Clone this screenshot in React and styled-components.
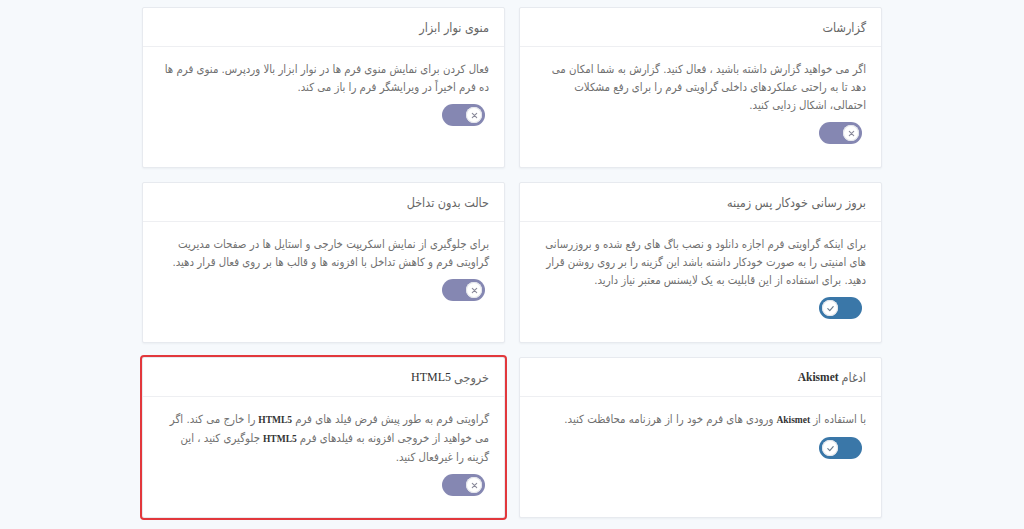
import React, { useState } from 'react';
import styled, { createGlobalStyle } from 'styled-components';

const GlobalStyle = createGlobalStyle`
  body {
    margin: 0;
    background: #f6f9fc;
    font-family: "DejaVu Sans Condensed", "DejaVu Sans", sans-serif;
  }
`;

// latin words (HTML5, Akismet) fall back to a serif in the original
const Latin = styled.span`
  font-family: "Liberation Serif", serif;
  font-weight: ${(p) => (p.$bold ? 700 : 400)};
  color: #333;
  font-size: ${(p) => p.$size || '9.5px'};
  margin: 0 3px;
`;

const getSettings = () => [
  {
    id: 'logging',
    title: 'گزارشات',
    text: 'اگر می خواهید گزارش داشته باشید ، فعال کنید. گزارش به شما امکان می دهد تا به راحتی عملکردهای داخلی گراویتی فرم را برای رفع مشکلات احتمالی، اشکال زدایی کنید.',
    on: false,
  },
  {
    id: 'toolbar',
    title: 'منوی نوار ابزار',
    text: 'فعال کردن برای نمایش منوی فرم ها در نوار ابزار بالا وردپرس. منوی فرم ها ده فرم اخیراً در ویرایشگر فرم را باز می کند.',
    on: false,
  },
  {
    id: 'autoupdate',
    title: 'بروز رسانی خودکار پس زمینه',
    text: 'برای اینکه گراویتی فرم اجازه دانلود و نصب باگ های رفع شده و بروزرسانی های امنیتی را به صورت خودکار داشته باشد این گزینه را بر روی روشن قرار دهید. برای استفاده از این قابلیت به یک لایسنس معتبر نیاز دارید.',
    on: true,
  },
  {
    id: 'noconflict',
    title: 'حالت بدون تداخل',
    text: 'برای جلوگیری از نمایش اسکریپت خارجی و استایل ها در صفحات مدیریت گراویتی فرم و کاهش تداخل با افزونه ها و قالب ها بر روی فعال قرار دهید.',
    on: false,
  },
  {
    id: 'akismet',
    title: <>ادغام<Latin $bold $size="11.5px">Akismet</Latin></>,
    text: <>با استفاده از<Latin $bold>Akismet</Latin>ورودی های فرم خود را از هرزنامه محافظت کنید.</>,
    on: true,
  },
  {
    id: 'html5',
    title: <>خروجی<Latin $size="12px">HTML5</Latin></>,
    text: <>گراویتی فرم به طور پیش فرض فیلد های فرم<Latin $bold>HTML5</Latin>را خارج می کند. اگر می خواهید از خروجی افزونه به فیلدهای فرم<Latin $bold>HTML5</Latin>جلوگیری کنید ، این گزینه را غیرفعال کنید.</>,
    on: false,
    highlighted: true,
  },
];

function Toggle({ on, onClick }) {
  return (
    <Track $on={on} onClick={onClick}>
      <Thumb>
        {on ? (
          <svg width="9" height="9" viewBox="0 0 10 10">
            <path d="M2 5.2 L4.2 7.3 L8 3" fill="none" stroke="#6b7a8a" strokeWidth="1.3" strokeLinecap="round" strokeLinejoin="round" />
          </svg>
        ) : (
          <svg width="7" height="7" viewBox="0 0 8 8">
            <path d="M1.5 1.5 L6.5 6.5 M6.5 1.5 L1.5 6.5" stroke="#8a8a9a" strokeWidth="1.3" strokeLinecap="round" />
          </svg>
        )}
      </Thumb>
    </Track>
  );
}

export default function App() {
  const settings = getSettings();
  const [values, setValues] = useState(
    Object.fromEntries(settings.map((s) => [s.id, s.on]))
  );

  return (
    <StPage>
      <GlobalStyle />
      <StGrid>
        {settings.map((s) => (
          <StCard key={s.id} $highlighted={s.highlighted}>
            <StCardHeader>{s.title}</StCardHeader>
            <StCardBody>
              <StText>{s.text}</StText>
              <Toggle
                on={values[s.id]}
                onClick={() => setValues({ ...values, [s.id]: !values[s.id] })}
              />
            </StCardBody>
          </StCard>
        ))}
      </StGrid>
    </StPage>
  );
}

const StPage = styled.div`
  min-height: 100vh;
  padding-top: 7px;
  direction: rtl;
`;

const StGrid = styled.div`
  display: grid;
  grid-template-columns: 363px 363px;
  grid-auto-rows: 161px;
  column-gap: 14px;
  row-gap: 14px;
  justify-content: center;
`;

const StCard = styled.div`
  background: #fff;
  border: 1px solid #e7eaef;
  border-radius: 2px;
  box-shadow: 0 1px 2px rgba(30, 50, 80, 0.05);
  display: flex;
  flex-direction: column;
  outline: ${(p) => (p.$highlighted ? '2px solid #e2383c' : 'none')};
`;

const StCardHeader = styled.div`
  height: 38px;
  display: flex;
  align-items: center;
  padding: 0 15px;
  border-bottom: 1px solid #eeeff2;
  color: #666;
  font-size: 12.5px;
`;

const StCardBody = styled.div`
  padding: 13px 15px 0 15px;
`;

const StText = styled.p`
  margin: 0;
  color: #707070;
  font-size: 11.35px;
  line-height: 18px;
`;

const Track = styled.button`
  display: flex;
  align-items: center;
  justify-content: ${(p) => (p.$on ? 'flex-end' : 'flex-start')};
  width: 43px;
  height: 22px;
  margin: 8px 4px 0 0;
  padding: 0 3px;
  border: none;
  border-radius: 11px;
  background: ${(p) => (p.$on ? '#3a77a8' : '#8587b2')};
  cursor: pointer;
`;

const Thumb = styled.span`
  width: 16px;
  height: 16px;
  border-radius: 50%;
  background: #fff;
  box-shadow: inset 0 0 0 1px #e3e5ea;
  display: flex;
  align-items: center;
  justify-content: center;
`;
